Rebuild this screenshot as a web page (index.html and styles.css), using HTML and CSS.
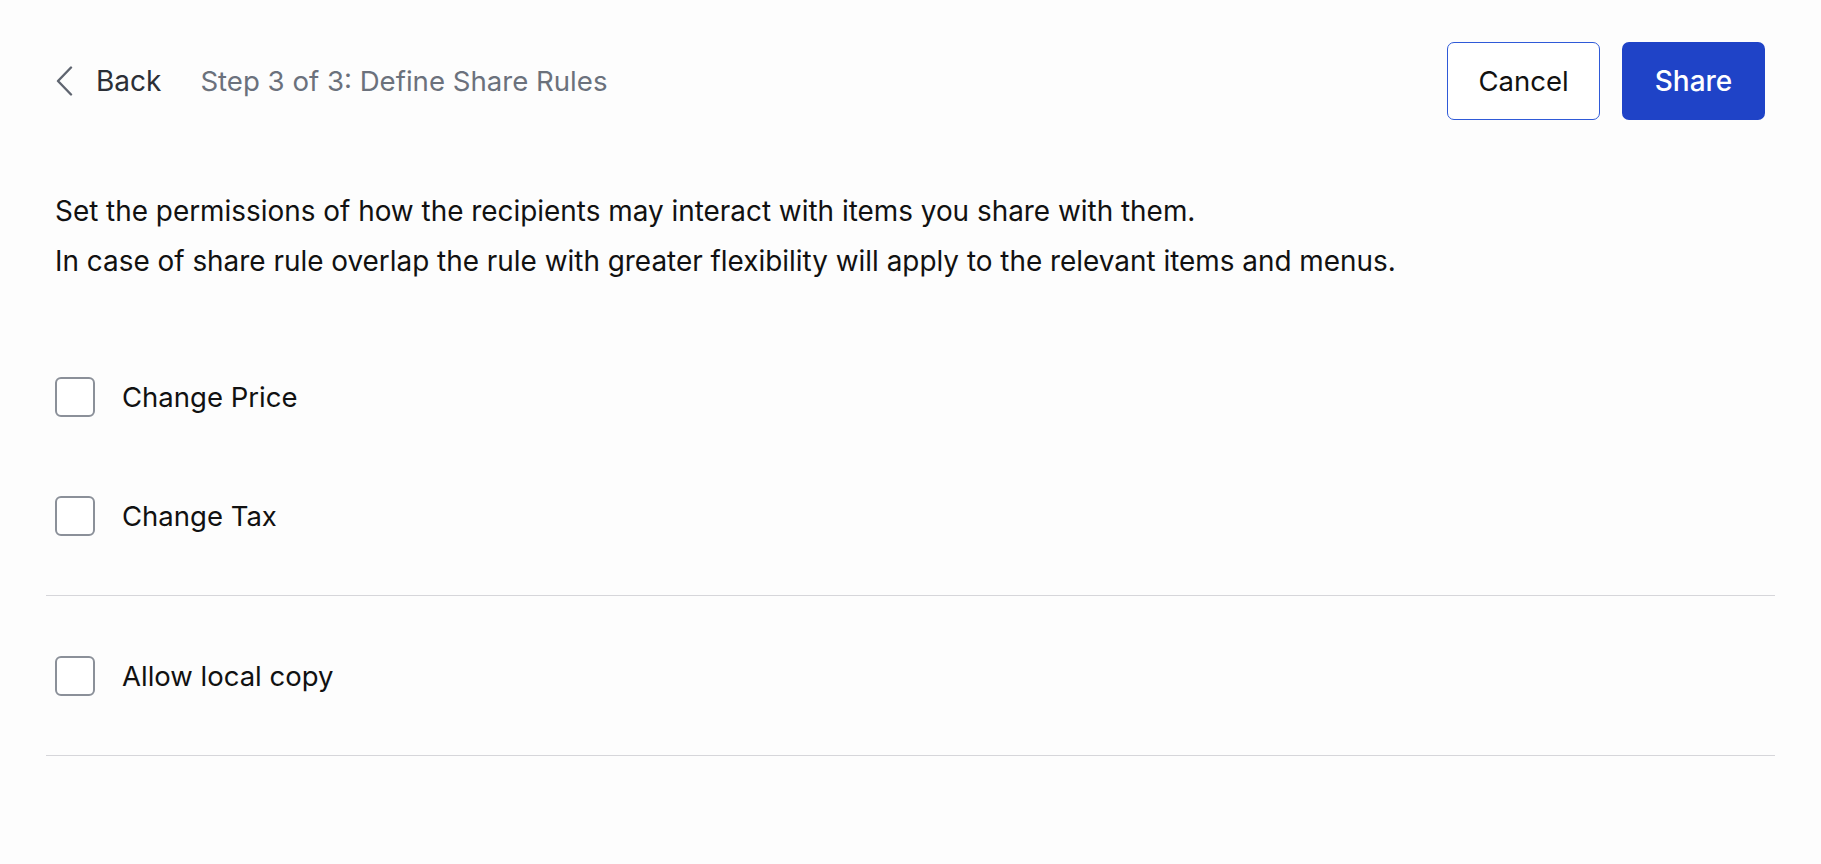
FILE: index.html
```html
<!DOCTYPE html>
<html lang="en">
<head>
<meta charset="utf-8">
<title>Define Share Rules</title>
<link rel="stylesheet" href="styles.css">
</head>
<body>
<div class="page">
  <header class="topbar">
    <div class="nav">
      <button class="back" type="button">
        <svg class="chev" width="20" height="30" viewBox="0 0 20 30" aria-hidden="true"><path d="M16 1.5 L3 15 L16 28.5" fill="none" stroke="#5f6570" stroke-width="2.4" stroke-linecap="round" stroke-linejoin="round"/></svg>
        <span>Back</span>
      </button>
      <span class="step">Step 3 of 3: Define Share Rules</span>
    </div>
    <div class="actions">
      <button class="btn btn-outline" type="button">Cancel</button>
      <button class="btn btn-primary" type="button">Share</button>
    </div>
  </header>

  <section class="intro">
    <p>Set the permissions of how the recipients may interact with items you share with them.</p>
    <p>In case of share rule overlap the rule with greater flexibility will apply to the relevant items and menus.</p>
  </section>

  <section class="group group-first">
    <label class="option"><span class="box"></span><span class="label">Change Price</span></label>
    <label class="option"><span class="box"></span><span class="label">Change Tax</span></label>
  </section>
  <section class="group">
    <label class="option"><span class="box"></span><span class="label">Allow local copy</span></label>
  </section>
</div>
</body>
</html>
```

FILE: styles.css
```css
* { box-sizing: border-box; }
html, body { margin: 0; padding: 0; }
body {
  background: #fdfdfd;
  font-family: Inter, "Noto Sans", "Liberation Sans", sans-serif;
  color: #111;
}
.page {
  padding: 42px 46px 0 46px;
}
.topbar {
  display: flex;
  align-items: center;
  justify-content: space-between;
  height: 78px;
  padding: 0 10px 0 9px;
}
.nav {
  display: flex;
  align-items: center;
  gap: 39px;
}
.back {
  display: flex;
  align-items: center;
  gap: 21px;
  background: none;
  border: 0;
  padding: 0;
  font: inherit;
  font-size: 28px;
  color: #2b2f36;
  cursor: pointer;
}
.chev { display: block; }
.step {
  font-size: 27.6px;
  color: #6b717c;
}
.actions {
  display: flex;
  gap: 22px;
}
.btn {
  height: 78px;
  border-radius: 7px;
  font: inherit;
  font-size: 27.5px;
  cursor: pointer;
}
.btn-outline {
  width: 153px;
  background: #fff;
  border: 1.5px solid #2f5ad8;
  color: #111;
}
.btn-primary {
  width: 143px;
  background: #1f43c7;
  border: 0;
  color: #fff;
  font-weight: 500;
  font-size: 28px;
}
.intro {
  margin-top: 66px;
  padding: 0 9px;
  font-size: 27.9px;
  line-height: 50px;
  color: #111;
}
.intro p { margin: 0; }
.group {
  display: flex;
  flex-direction: column;
  gap: 79px;
  padding: 60px 9px 59px;
  border-bottom: 1px solid #d6d6da;
}
.group-first {
  margin-top: 31px;
}
.option {
  display: flex;
  align-items: center;
  gap: 27px;
  height: 40px;
  font-size: 27.5px;
  color: #111;
  cursor: pointer;
}
.box {
  width: 40px;
  height: 40px;
  border: 2px solid #8b9099;
  border-radius: 6px;
  background: #fff;
  flex: none;
}
```
